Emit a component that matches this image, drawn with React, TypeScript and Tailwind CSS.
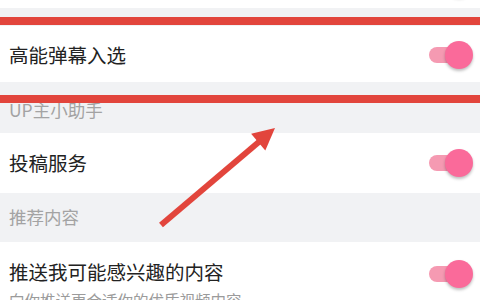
import React from 'react'

const font = { fontFamily: '"Noto Sans CJK SC", "Noto Sans", sans-serif' }

function Toggle() {
  return (
    <div className="relative w-[44px] h-[28px] shrink-0">
      <div className="absolute left-0 top-[6px] w-[34px] h-[16px] rounded-full bg-[#f59ab2]" />
      <div className="absolute right-0 top-0 w-[28px] h-[28px] rounded-full bg-[#fa6a9a] shadow-[0_2px_3px_rgba(0,0,0,0.25)]" />
    </div>
  )
}

function Row({ title, subtitle, className }: { title: string; subtitle?: string; className: string }) {
  return (
    <div className={`flex items-center justify-between bg-white pl-[9px] pr-[7px] ${className}`}>
      <div className="min-w-0">
        <p className="text-[19.5px] leading-[24px] text-[#222]">{title}</p>
        {subtitle && <p className="text-[15.5px] leading-[20px] text-[#9b9b9b] mt-[6px] whitespace-nowrap">{subtitle}</p>}
      </div>
      <Toggle />
    </div>
  )
}

function Header({ label, className }: { label: string; className: string }) {
  return (
    <div className={`flex items-center pl-[9px] text-[17.5px] text-[#a3a3a3] ${className}`}>{label}</div>
  )
}

export default function App() {
  return (
    <div style={font} className="relative w-[480px] h-[300px] overflow-hidden bg-[#f1f2f4]">
      {/* partially scrolled row */}
      <div className="flex items-center justify-between bg-white pl-[9px] pr-[7px] h-[56px] -mt-[48px] pt-[6px]">
        <p className="text-[19.5px] text-[#222] opacity-60">弹幕屏蔽设置</p>
        <Toggle />
      </div>

      <div className="h-[18px]" />

      <Row title="高能弹幕入选" className="h-[56px] pt-[2px]" />
      <Header label="UP主小助手" className="h-[51px] pt-[6px]" />
      <Row title="投稿服务" className="h-[60px]" />
      <Header label="推荐内容" className="h-[50px] -mt-[1px]" />
      <Row title="推送我可能感兴趣的内容" subtitle="向你推送更合适你的优质视频内容" className="h-[70px] items-start pt-[18px]" />

      {/* annotation overlay */}
      <div className="absolute left-0 top-[17px] w-full h-[8px] bg-[#e2453c]" />
      <div className="absolute left-0 top-[95px] w-full h-[8px] bg-[#e2453c]" />
      <svg className="absolute left-0 top-0" width="480" height="300" viewBox="0 0 480 300">
        <line x1="161" y1="225" x2="260" y2="141" stroke="#e2453c" strokeWidth="6" />
        <polygon points="275,128 265.3,150.6 251.1,133.8" fill="#e2453c" />
      </svg>
    </div>
  )
}
